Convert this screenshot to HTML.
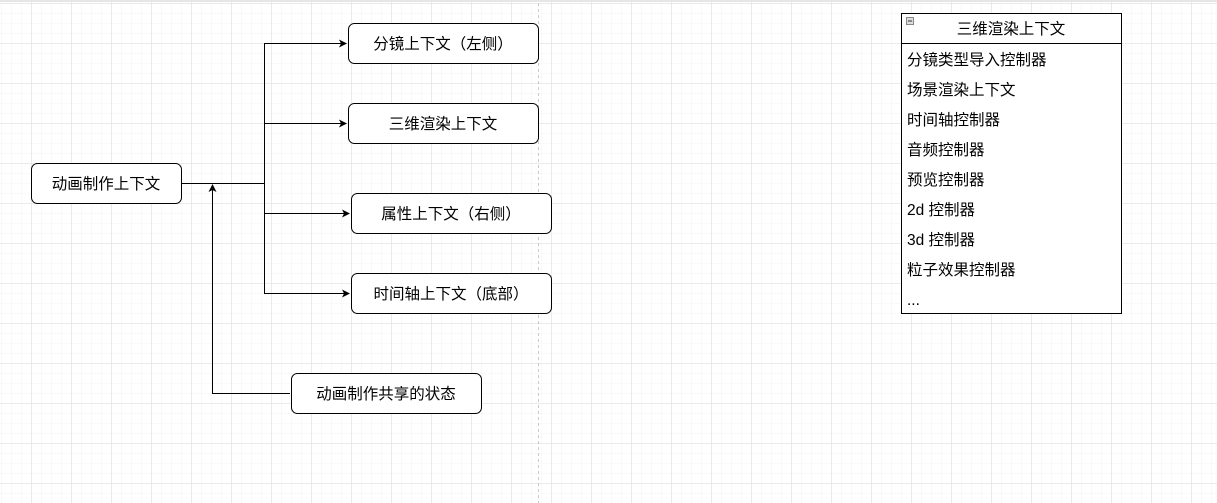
<!DOCTYPE html>
<html><head><meta charset="utf-8"><style>
html,body{margin:0;padding:0;background:#fff;}
svg{display:block}
text{font-family:"Liberation Sans","Noto Sans CJK SC",sans-serif;font-size:15.5px;fill:#000}
</style></head><body>
<svg width="1217" height="503" viewBox="0 0 1217 503" xmlns="http://www.w3.org/2000/svg">
<defs>
<pattern id="minor" x="1" y="3" width="10" height="10" patternUnits="userSpaceOnUse">
<path d="M0 0V10M0 0H10" stroke="#f3f3f3" stroke-width="1" fill="none"/>
</pattern>
<pattern id="major" x="31.5" y="3.5" width="40" height="40" patternUnits="userSpaceOnUse">
<path d="M0 0V40M0 0H40" stroke="#e2e2e2" stroke-width="1" fill="none"/>
</pattern>
<marker id="ar" markerWidth="8" markerHeight="8" refX="7" refY="4" orient="auto" markerUnits="userSpaceOnUse">
<path d="M0 0L8 4L0 8L2 4Z" fill="#000"/>
</marker>
</defs>
<rect width="1217" height="503" fill="url(#minor)"/>
<rect width="1217" height="503" fill="url(#major)"/>
<rect width="1217" height="2" fill="#e6e6e6"/>
<line x1="538.5" y1="3" x2="538.5" y2="503" stroke="#c8c8c8" stroke-dasharray="3,3"/>
<g fill="none" stroke="#000" stroke-width="1">
<path d="M182 183.5H264.5V43.5H346" marker-end="url(#ar)"/>
<path d="M264.5 123.5H346" marker-end="url(#ar)"/>
<path d="M264.5 183.5V213.5H349" marker-end="url(#ar)"/>
<path d="M264.5 213.5V293.5H349" marker-end="url(#ar)"/>
<path d="M290 393.5H212.5V185" marker-end="url(#ar)"/>
</g>
<g fill="#fff" stroke="#000">
<rect x="31.5" y="163.5" width="150" height="40" rx="6"/>
<rect x="348.5" y="23.5" width="190" height="40" rx="6"/>
<rect x="348.5" y="103.5" width="190" height="40" rx="6"/>
<rect x="351.5" y="193.5" width="200" height="40" rx="6"/>
<rect x="351.5" y="273.5" width="200" height="40" rx="6"/>
<rect x="291.5" y="373.5" width="190" height="40" rx="6"/>
<rect x="901.5" y="13.5" width="220" height="300"/>
</g>
<line x1="902" y1="43.5" x2="1121" y2="43.5" stroke="#000"/>
<rect x="906.5" y="17.5" width="7" height="7" fill="#ddd" stroke="#888"/>
<line x1="908" y1="21" x2="912" y2="21" stroke="#333"/>
<g text-anchor="middle">
<text x="106" y="189">动画制作上下文</text>
<text x="443" y="49">分镜上下文（左侧）</text>
<text x="443" y="129">三维渲染上下文</text>
<text x="451" y="219">属性上下文（右侧）</text>
<text x="451" y="299">时间轴上下文（底部）</text>
<text x="386" y="399">动画制作共享的状态</text>
<text x="1011" y="34">三维渲染上下文</text>
</g>
<g>
<text x="907" y="65">分镜类型导入控制器</text>
<text x="907" y="95">场景渲染上下文</text>
<text x="907" y="125">时间轴控制器</text>
<text x="907" y="155">音频控制器</text>
<text x="907" y="185">预览控制器</text>
<text x="907" y="215">2d 控制器</text>
<text x="907" y="245">3d 控制器</text>
<text x="907" y="275">粒子效果控制器</text>
<text x="907" y="305">...</text>
</g>
</svg>
</body></html>
